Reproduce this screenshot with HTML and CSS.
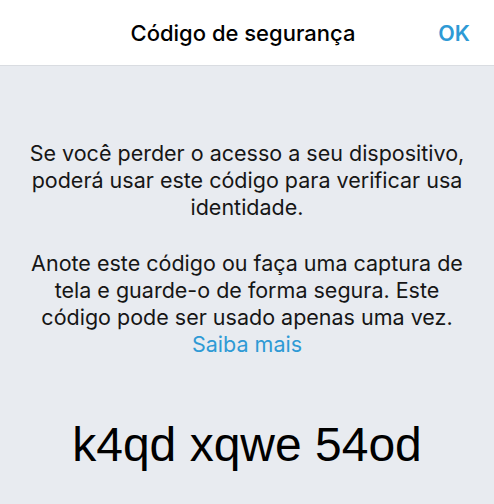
FILE: index.html
```html
<!DOCTYPE html>
<html lang="pt">
<head>
    <meta charset="UTF-8">
    <meta name="viewport" content="width=device-width, initial-scale=1.0">
    <title>Código de segurança</title>
    <link rel="stylesheet" href="styles.css">
</head>
<body>
    <!-- Barra superior -->
    <header class="top-bar">
        <span class="top-spacer"></span>
        <h1 class="top-title">Código de segurança</h1>
        <a class="top-ok" href="#">OK</a>
    </header>

    <main class="content">
        <p class="info">Se você perder o acesso a seu dispositivo, poderá usar este código para verificar usa identidade.</p>
        <p class="info">Anote este código ou faça uma captura de tela e guarde-o de forma segura. Este código pode ser usado apenas uma vez.<br><a class="more" href="#">Saiba mais</a></p>
        <div class="code">k4qd xqwe 54od</div>
    </main>
</body>
</html>
```

FILE: styles.css
```css
body {
    margin: 0;
    background: #e8ebf0;
    font-family: Inter, 'Noto Sans', sans-serif;
    color: #161616;
}

.top-bar {
    height: 65px;
    background: #ffffff;
    border-bottom: 1px solid #d9dce1;
    display: grid;
    grid-template-columns: 76px 1fr 84px;
    align-items: center;
}

.top-title {
    margin: 0;
    text-align: center;
    font-size: 22px;
    font-weight: 500;
    color: #000000;
}

.top-ok {
    text-align: right;
    padding-right: 24px;
    font-size: 21.5px;
    font-weight: 600;
    color: #2e9ad5;
    text-decoration: none;
}

.content {
    padding: 74px 26px 0;
    text-align: center;
}

.info {
    margin: 0 0 29px;
    font-size: 21.5px;
    line-height: 27px;
}

.more {
    color: #2e9ad5;
    text-decoration: none;
}

.code {
    margin-top: 59px;
    font-family: 'Liberation Sans', Arial, sans-serif;
    font-size: 48px;
    color: #000000;
}
```
